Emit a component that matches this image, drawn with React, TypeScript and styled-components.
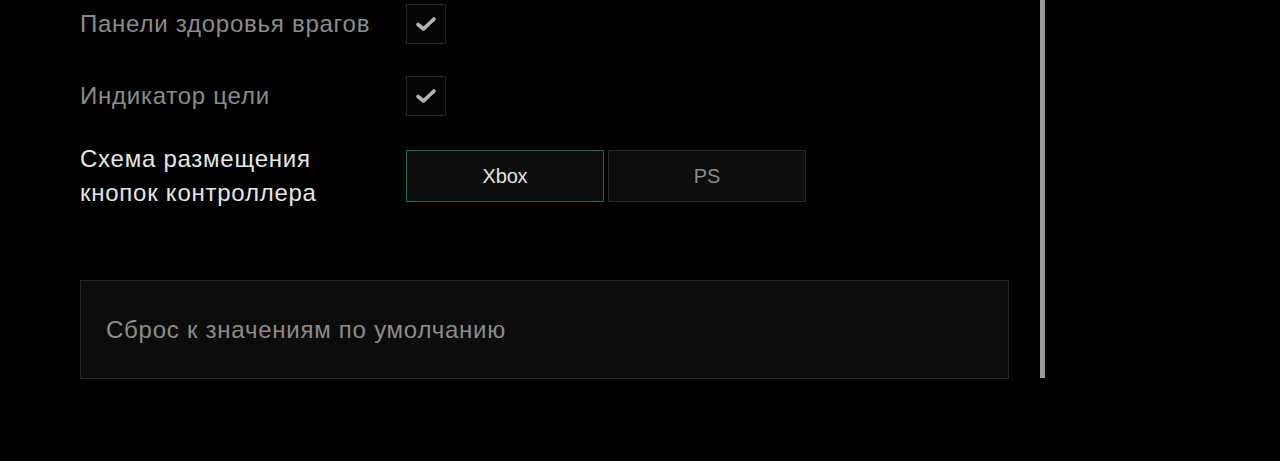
import React from "react";
import styled, { createGlobalStyle } from "styled-components";

const Global = createGlobalStyle`
  html, body { margin: 0; padding: 0; background: #000; }
  body { font-family: "Liberation Sans", Arial, sans-serif; -webkit-font-smoothing: antialiased; }
`;

const Page = styled.div`
  display: flex;
  align-items: flex-start;
  gap: 31px;
  padding: 0 0 0 80px;
  height: 461px;
  box-sizing: border-box;
  overflow: hidden;
`;

const Column = styled.div`
  width: 929px;
  display: flex;
  flex-direction: column;
  padding-top: 4px;
`;

const Row = styled.div<{ $h: number; $mb: number }>`
  display: flex;
  align-items: center;
  height: ${(p) => p.$h}px;
  margin-bottom: ${(p) => p.$mb}px;
`;

const Label = styled.div<{ $bright?: boolean }>`
  width: 326px;
  font-size: 24px;
  letter-spacing: 0.75px;
  line-height: 34px;
  color: ${(p) => (p.$bright ? "#e6e6e6" : "#8c8c8c")};
  white-space: nowrap;
`;

const Check = styled.div`
  width: 40px;
  height: 40px;
  box-sizing: border-box;
  border: 1px solid #262626;
  background: #050505;
  display: flex;
  align-items: center;
  justify-content: center;
`;

const Segments = styled.div`
  display: flex;
  gap: 4px;
`;

const Segment = styled.div<{ $active?: boolean }>`
  width: 198px;
  height: 52px;
  box-sizing: border-box;
  border: 1px solid ${(p) => (p.$active ? "#1d6b4e" : "#2a2a2a")};
  background: #0d0d0d;
  color: ${(p) => (p.$active ? "#e2e2e2" : "#8a8a8a")};
  font-size: 20px;
  display: flex;
  align-items: center;
  justify-content: center;
  letter-spacing: -0.2px;
`;

const ResetBox = styled.div`
  height: 99px;
  box-sizing: border-box;
  border: 1px solid #262626;
  background: #0c0c0c;
  display: flex;
  align-items: center;
  padding-left: 25px;
  font-size: 24px;
  letter-spacing: 0.75px;
  color: #8c8c8c;
`;

const Scrollbar = styled.div`
  width: 5px;
  height: 378px;
  background: #9a9a9a;
`;

const CheckMark = () => (
  <svg width="22" height="16" viewBox="0 0 22 16">
    <path d="M3 8.5 L8.5 13 L19 3" fill="none" stroke="#b4b4b4" strokeWidth="3.6" strokeLinecap="round" strokeLinejoin="round" />
  </svg>
);

export default function App() {
  return (
    <>
      <Global />
      <Page>
        <Column>
          <Row $h={40} $mb={32}>
            <Label>Панели здоровья врагов</Label>
            <Check><CheckMark /></Check>
          </Row>
          <Row $h={40} $mb={34}>
            <Label>Индикатор цели</Label>
            <Check><CheckMark /></Check>
          </Row>
          <Row $h={52} $mb={78}>
            <Label $bright>
              Схема размещения
              <br />
              кнопок контроллера
            </Label>
            <Segments>
              <Segment $active>Xbox</Segment>
              <Segment>PS</Segment>
            </Segments>
          </Row>
          <ResetBox>Сброс к значениям по умолчанию</ResetBox>
        </Column>
        <Scrollbar />
      </Page>
    </>
  );
}
